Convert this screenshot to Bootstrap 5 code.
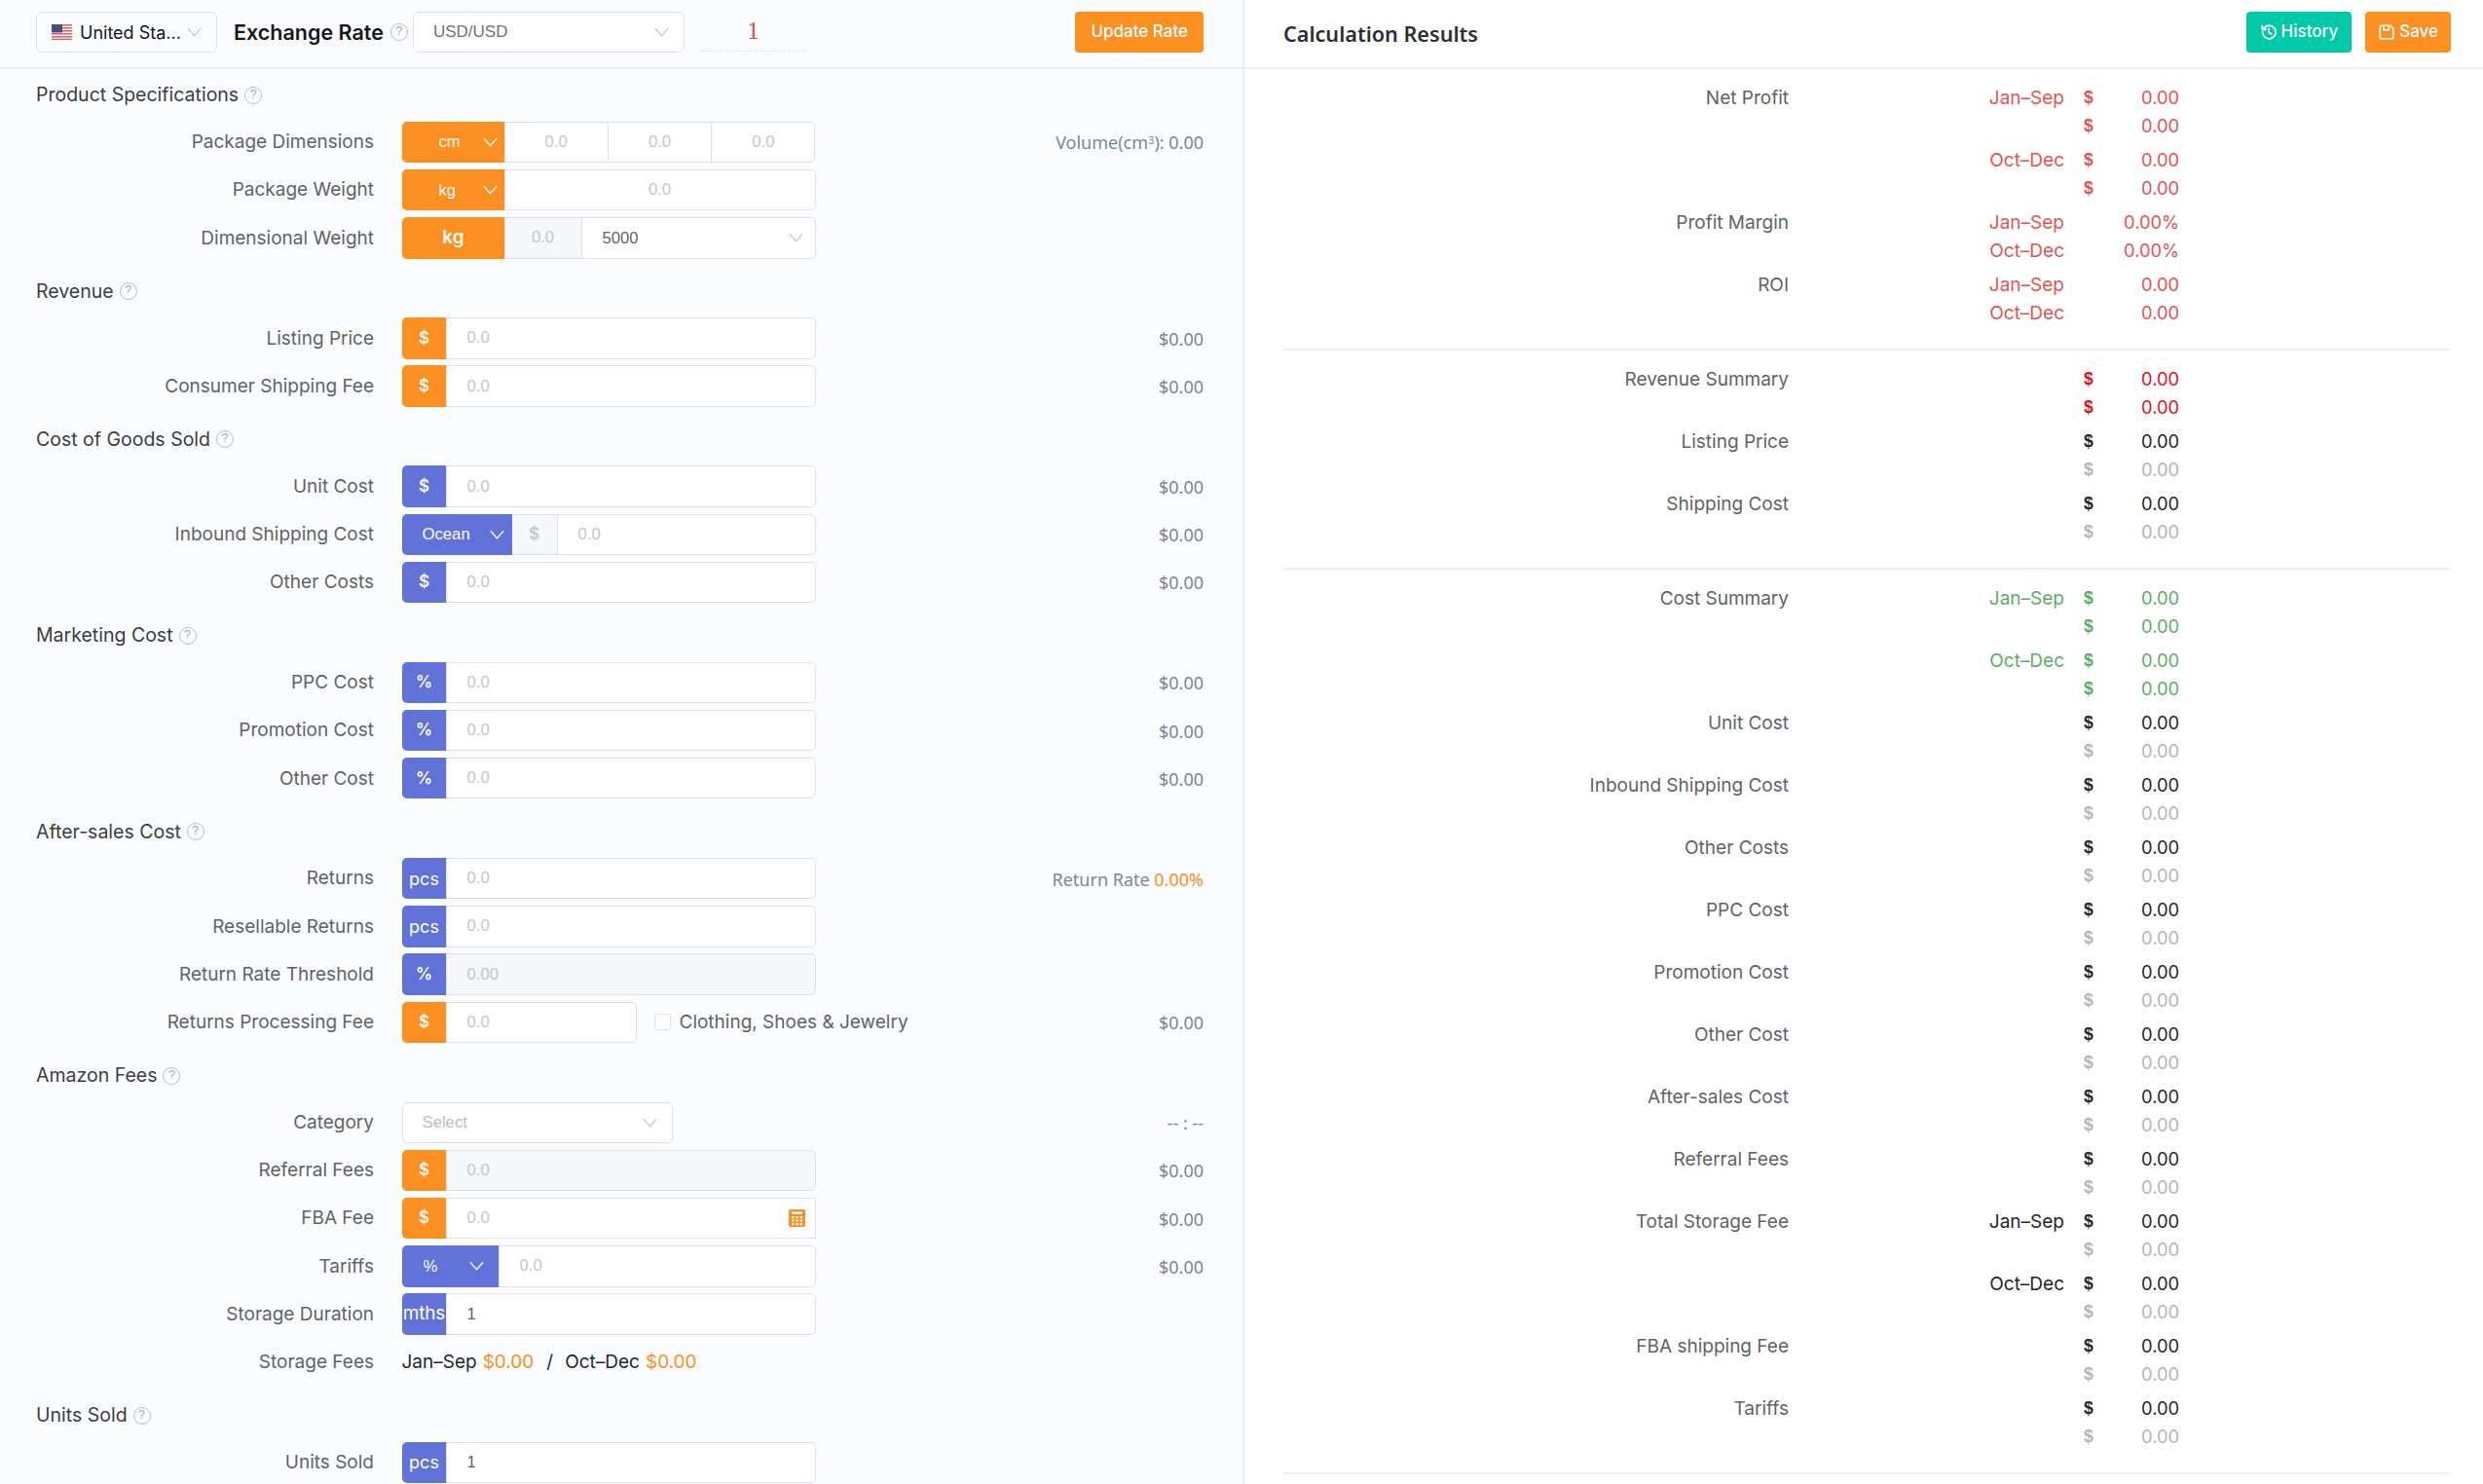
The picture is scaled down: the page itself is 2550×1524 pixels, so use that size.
<!DOCTYPE html>
<html lang="en">
<head>
<meta charset="utf-8">
<title>Calculator</title>
<link rel="stylesheet" href="https://cdn.jsdelivr.net/npm/bootstrap@5.3.0/dist/css/bootstrap.min.css">
<style>
:root{--og:#fb8f22;--bl:#6172d9;--bd:#dfe2ea;}
html,body{height:1524px;overflow:hidden;margin:0;}
body{font-family:Inter,"Noto Sans",sans-serif;font-size:19px;background:#fff;color:#5f6368;}
.pane-l{width:1278px;flex:none;background:#fbfcfe;border-right:2px solid #eceef2;}
.pane-r{flex:1;min-width:0;background:#fff;}
.top-l,.top-r{height:71px;border-bottom:2px solid #eceef2;}
.top-l{padding:0 40px 3px 37px;}
.top-r{padding:0 33px 3px 40px;}
.ctry{width:186px;height:42px;padding:0 0 0 15px;font-size:18px;color:#14161c;background-color:transparent;border-color:var(--bd);display:flex;align-items:center;gap:8px;white-space:nowrap;background-position:right 15px center;}
.form-select{background-image:url("data:image/svg+xml,%3Csvg xmlns='http://www.w3.org/2000/svg' viewBox='0 0 16 10'%3E%3Cpath d='M1 1l7 8 7-8' fill='none' stroke='%23b4b9c3' stroke-width='1.2'/%3E%3C/svg%3E");background-size:15px 10px;}
.ex-ttl{font-size:21.500px;font-weight:600;color:#16181d;margin-left:17px;white-space:nowrap;}
.hq{width:18px;height:18px;border:1.5px solid #b8bec9;border-radius:50%;color:#a2a9b7;font-size:12.500px;line-height:15px;text-align:center;display:inline-block;flex:none;font-family:"Liberation Sans",sans-serif;}
.ex-hq{margin-left:7px;}
.sel-usd{width:279px;height:42px;margin-left:5px;font-family:"Liberation Sans",sans-serif;font-size:17px;color:#6b7280;padding-left:20px;border-color:var(--bd);background-color:#fff;background-position:right 15px center;}
.rate-in{width:107px;height:40px;margin:0 0 0 17px;border:0;border-bottom:1.5px dashed #dcdfe6;background:transparent;color:#e24b4b;font-family:"Liberation Serif",serif;font-size:25px;text-align:center;outline:0;border-radius:0;padding:0 0 2px;}
.btn-og,.btn-tl{height:42px;border:0;border-radius:4px;color:#fff;font-size:17px;font-weight:500;padding:0 14px;display:inline-flex;align-items:center;gap:4px;white-space:nowrap;}
.btn-og{background:var(--og);}
.btn-og:hover{background:var(--og);color:#fff;}
.btn-tl{background:#00c9a7;}
.btn-tl:hover{background:#00c9a7;color:#fff;}
.btn-ur{padding:0 16px;}
.btn-sv{margin-left:14px;padding:0 13px;}
.res-ttl{font-family:"Noto Sans",sans-serif;font-size:21.600px;font-weight:600;color:#2b2f36;margin:3px 0 0;}
.sec-ttl{height:53.8px;display:flex;align-items:center;gap:6px;padding-left:37px;color:#3a3d44;font-size:19.500px;}
.frow{height:42.4px;margin-bottom:6.8px;display:flex;align-items:center;padding:0 40px 0 0;}
.flab{width:384px;flex:none;text-align:right;white-space:nowrap;color:#5f6368;padding-top:1px;}
.fctl{width:425px;margin-left:28.5px;flex:none;height:100%;}
.fctl.shortc{width:241px;}
.fctl.catc{width:278px;}
.fctl .form-control,.fctl .form-select{height:100%;border-color:var(--bd);font-family:"Liberation Sans",sans-serif;font-size:16.7px;color:#5f6368;border-radius:5px;padding:0 0 0 21px;background-color:#fff;min-height:0;box-shadow:none;}
.fctl .form-control::placeholder{color:#c2c6cf;}
.fctl .form-control:disabled{background:#f5f7fa;}
.fctl .ctr{text-align:center;padding:0;}
.fctl .input-group-text{width:46px;padding:0;justify-content:center;border:0;border-radius:5px 0 0 5px;color:#fff;font-size:17px;font-weight:600;height:100%;}
.input-group-text.fo{background:var(--og);}
.input-group-text.fb{background:var(--bl);}
.fctl .input-group-text.un{font-weight:400;font-size:18px;}
.fctl .input-group-text.mt{font-size:19px;letter-spacing:-.2px;}
.fctl .wide{width:106px;}
.fctl .fw-k{font-size:19px;}
.fctl .form-select.so,.fctl .form-select.sb{flex:none;border:0;color:#fff;font-family:"Liberation Sans",sans-serif;border-radius:5px 0 0 5px;background-image:url("data:image/svg+xml,%3Csvg xmlns='http://www.w3.org/2000/svg' viewBox='0 0 16 10'%3E%3Cpath d='M1 1l7 8 7-8' fill='none' stroke='%23fff' stroke-width='1.4'/%3E%3C/svg%3E");background-position:right 8px center;}
.fctl .form-select.so{width:106px;background-color:var(--og);padding-left:38px;}
.fctl .form-select.sb{width:113px;background-color:var(--bl);padding-left:21px;}
.fctl .form-select.sp{width:100px;padding-left:22px;background-position:right 16px center;}
.fctl .addg{width:48px;padding:0;justify-content:center;background:#f5f7fa;border:1px solid var(--bd);color:#c2c6cf;font-weight:600;border-radius:0;}
.fctl .w80{flex:none;width:80px;}
.fctl .sel-w{background-position:right 12px center;padding-left:21px;}
.fctl .sel-ph{color:#b9bdc6;padding-left:20px;background-position:right 15px center;}
.fval{margin-left:auto;color:#7d8694;white-space:nowrap;padding-top:2px;font-family:"Noto Sans",sans-serif;font-size:18px;}
.fval b{font-weight:400;color:var(--og);}
.fval sup{font-size:11px;}
.calc{position:absolute;right:11px;top:50%;transform:translateY(-50%);z-index:6;}
.chk{width:17px;height:17px;border:1.5px solid var(--bd);border-radius:3px;background:#fff;margin:0 9px 0 18px;flex:none;}
.chk-l{white-space:nowrap;color:#5f6368;}
.stor{margin-left:28.5px;color:#23262c;white-space:nowrap;display:flex;gap:6px;padding-top:1px;}
.stor b{font-weight:400;color:var(--og);}
.stor i{font-style:normal;margin:0 6px 0 7px;}
.rbody{padding:15px 33px 0 40px;}
.rgrp{display:flex;margin-bottom:6.4px;line-height:28.8px;}
.rlab{width:519px;flex:none;text-align:right;color:#5f6368;white-space:nowrap;padding-top:1px;}
.rline{display:flex;height:28.8px;}
.rper{width:283px;flex:none;text-align:right;white-space:nowrap;padding-top:1px;}
.rsym{width:12px;margin-left:20px;font-weight:700;flex:none;font-size:17.5px;font-family:"Liberation Sans",sans-serif;}
.rval{width:86px;text-align:right;flex:none;white-space:nowrap;font-size:18.3px;}
.c-r{color:#e25454;}
.c-rr{color:#e01218;}
.c-g{color:#5dad66;}
.c-k{color:#23262c;}
.c-m{color:#b3b5b9;}
.rsep{border:0;border-top:2px solid #eceef2;opacity:1;margin:22.5px 0 15px;margin-right:1px;}
</style>
</head>
<body>
<div class="d-flex">
<section class="pane-l">
  <div class="top-l d-flex align-items-center">
    <div class="form-select ctry"><svg width="21" height="16" viewBox="0 0 21 16"><rect width="21" height="16" fill="#fff"/><g fill="#d9646b"><rect width="21" height="1.6"/><rect y="3" width="21" height="1.6"/><rect y="6" width="21" height="1.6"/><rect y="9" width="21" height="1.6"/><rect y="12" width="21" height="1.6"/><rect y="14.6" width="21" height="1.4"/></g><rect width="11" height="8.5" fill="#46507f"/></svg><span>United Sta...</span></div>
    <span class="ex-ttl">Exchange Rate</span><span class="hq ex-hq">?</span>
    <select class="form-select sel-usd"><option>USD/USD</option></select>
    <input class="rate-in" value="1" aria-label="rate">
    <button class="btn btn-og btn-ur ms-auto">Update Rate</button>
  </div>

  <div class="sec-ttl">Product Specifications <span class="hq">?</span></div>
  <div class="frow"><div class="flab">Package Dimensions</div><div class="fctl input-group"><select class="form-select so"><option>cm</option></select><input class="form-control ctr" placeholder="0.0"><input class="form-control ctr" placeholder="0.0"><input class="form-control ctr" placeholder="0.0"></div><div class="fval">Volume(cm<sup>3</sup>): 0.00</div></div>
  <div class="frow"><div class="flab">Package Weight</div><div class="fctl input-group"><select class="form-select so"><option>kg</option></select><input class="form-control ctr" placeholder="0.0"></div></div>
  <div class="frow"><div class="flab">Dimensional Weight</div><div class="fctl input-group"><span class="input-group-text fo wide fw-k">kg</span><input class="form-control ctr w80" placeholder="0.0" disabled><select class="form-select sel-w"><option>5000</option></select></div></div>

  <div class="sec-ttl">Revenue <span class="hq">?</span></div>
  <div class="frow"><div class="flab">Listing Price</div><div class="fctl input-group"><span class="input-group-text fo">$</span><input class="form-control" placeholder="0.0"></div><div class="fval">$0.00</div></div>
  <div class="frow"><div class="flab">Consumer Shipping Fee</div><div class="fctl input-group"><span class="input-group-text fo">$</span><input class="form-control" placeholder="0.0"></div><div class="fval">$0.00</div></div>

  <div class="sec-ttl">Cost of Goods Sold <span class="hq">?</span></div>
  <div class="frow"><div class="flab">Unit Cost</div><div class="fctl input-group"><span class="input-group-text fb">$</span><input class="form-control" placeholder="0.0"></div><div class="fval">$0.00</div></div>
  <div class="frow"><div class="flab">Inbound Shipping Cost</div><div class="fctl input-group"><select class="form-select sb"><option>Ocean</option></select><span class="input-group-text addg">$</span><input class="form-control" placeholder="0.0"></div><div class="fval">$0.00</div></div>
  <div class="frow"><div class="flab">Other Costs</div><div class="fctl input-group"><span class="input-group-text fb">$</span><input class="form-control" placeholder="0.0"></div><div class="fval">$0.00</div></div>

  <div class="sec-ttl">Marketing Cost <span class="hq">?</span></div>
  <div class="frow"><div class="flab">PPC Cost</div><div class="fctl input-group"><span class="input-group-text fb">%</span><input class="form-control" placeholder="0.0"></div><div class="fval">$0.00</div></div>
  <div class="frow"><div class="flab">Promotion Cost</div><div class="fctl input-group"><span class="input-group-text fb">%</span><input class="form-control" placeholder="0.0"></div><div class="fval">$0.00</div></div>
  <div class="frow"><div class="flab">Other Cost</div><div class="fctl input-group"><span class="input-group-text fb">%</span><input class="form-control" placeholder="0.0"></div><div class="fval">$0.00</div></div>

  <div class="sec-ttl">After-sales Cost <span class="hq">?</span></div>
  <div class="frow"><div class="flab">Returns</div><div class="fctl input-group"><span class="input-group-text fb un">pcs</span><input class="form-control" placeholder="0.0"></div><div class="fval">Return Rate <b>0.00%</b></div></div>
  <div class="frow"><div class="flab">Resellable Returns</div><div class="fctl input-group"><span class="input-group-text fb un">pcs</span><input class="form-control" placeholder="0.0"></div></div>
  <div class="frow"><div class="flab">Return Rate Threshold</div><div class="fctl input-group"><span class="input-group-text fb">%</span><input class="form-control" placeholder="0.00" disabled></div></div>
  <div class="frow"><div class="flab">Returns Processing Fee</div><div class="fctl shortc input-group"><span class="input-group-text fo">$</span><input class="form-control" placeholder="0.0"></div><span class="chk"></span><span class="chk-l">Clothing, Shoes &amp; Jewelry</span><div class="fval">$0.00</div></div>

  <div class="sec-ttl">Amazon Fees <span class="hq">?</span></div>
  <div class="frow"><div class="flab">Category</div><div class="fctl catc"><select class="form-select sel-ph"><option>Select</option></select></div><div class="fval">-- : --</div></div>
  <div class="frow"><div class="flab">Referral Fees</div><div class="fctl input-group"><span class="input-group-text fo">$</span><input class="form-control" placeholder="0.0" disabled></div><div class="fval">$0.00</div></div>
  <div class="frow"><div class="flab">FBA Fee</div><div class="fctl input-group position-relative"><span class="input-group-text fo">$</span><input class="form-control" placeholder="0.0"><svg class="calc" width="17" height="18" viewBox="0 0 17 18"><rect width="17" height="18" rx="2" fill="#fb8f22"/><rect x="3" y="2.5" width="11" height="2.4" fill="#fff"/><g fill="#fff"><rect x="3" y="7" width="2.4" height="2.2"/><rect x="7.3" y="7" width="2.4" height="2.2"/><rect x="11.6" y="7" width="2.4" height="2.2"/><rect x="3" y="10.5" width="2.4" height="2.2"/><rect x="7.3" y="10.5" width="2.4" height="2.2"/><rect x="11.6" y="10.5" width="2.4" height="2.2"/><rect x="3" y="14" width="2.4" height="2.2"/><rect x="7.3" y="14" width="2.4" height="2.2"/><rect x="11.6" y="14" width="2.4" height="2.2"/></g></svg></div><div class="fval">$0.00</div></div>
  <div class="frow"><div class="flab">Tariffs</div><div class="fctl input-group"><select class="form-select sb sp"><option>%</option></select><input class="form-control" placeholder="0.0"></div><div class="fval">$0.00</div></div>
  <div class="frow"><div class="flab">Storage Duration</div><div class="fctl input-group"><span class="input-group-text fb un mt">mths</span><input class="form-control" value="1"></div></div>
  <div class="frow"><div class="flab">Storage Fees</div><div class="stor"><span>Jan–Sep</span><b>$0.00</b><i>/</i><span>Oct–Dec</span><b>$0.00</b></div></div>

  <div class="sec-ttl">Units Sold <span class="hq">?</span></div>
  <div class="frow"><div class="flab">Units Sold</div><div class="fctl input-group"><span class="input-group-text fb un">pcs</span><input class="form-control" value="1"></div></div>
</section>

<section class="pane-r">
  <div class="top-r d-flex align-items-center">
    <h2 class="res-ttl">Calculation Results</h2>
    <button class="btn btn-tl ms-auto"><svg width="18" height="18" viewBox="0 0 24 24" fill="none" stroke="#fff" stroke-width="2.4" stroke-linecap="round" stroke-linejoin="round"><path d="M3.5 12a9 9 0 1 0 2.8-6.5L3.5 8.5"/><path d="M3 3.5v5h5"/><path d="M12 7.5V12.500l3.500 2"/></svg>History</button>
    <button class="btn btn-og btn-sv"><svg width="18" height="18" viewBox="0 0 24 24" fill="none" stroke="#fff" stroke-width="2.300" stroke-linejoin="round"><path d="M5 3h12l4 4v12a2 2 0 0 1-2 2H5a2 2 0 0 1-2-2V5a2 2 0 0 1 2-2z"/><path d="M8 3v6h7V3"/></svg>Save</button>
  </div>
  <div class="rbody">
    <div class="rgrp"><div class="rlab">Net Profit</div><div class="c-r"><div class="rline"><span class="rper">Jan–Sep</span><span class="rsym">$</span><span class="rval">0.00</span></div><div class="rline"><span class="rper"></span><span class="rsym">$</span><span class="rval">0.00</span></div></div></div>
    <div class="rgrp"><div class="rlab"></div><div class="c-r"><div class="rline"><span class="rper">Oct–Dec</span><span class="rsym">$</span><span class="rval">0.00</span></div><div class="rline"><span class="rper"></span><span class="rsym">$</span><span class="rval">0.00</span></div></div></div>
    <div class="rgrp"><div class="rlab">Profit Margin</div><div class="c-r"><div class="rline"><span class="rper">Jan–Sep</span><span class="rsym"></span><span class="rval">0.00%</span></div><div class="rline"><span class="rper">Oct–Dec</span><span class="rsym"></span><span class="rval">0.00%</span></div></div></div>
    <div class="rgrp"><div class="rlab">ROI</div><div class="c-r"><div class="rline"><span class="rper">Jan–Sep</span><span class="rsym"></span><span class="rval">0.00</span></div><div class="rline"><span class="rper">Oct–Dec</span><span class="rsym"></span><span class="rval">0.00</span></div></div></div>
    <hr class="rsep">
    <div class="rgrp"><div class="rlab">Revenue Summary</div><div class="c-rr"><div class="rline"><span class="rper"></span><span class="rsym">$</span><span class="rval">0.00</span></div><div class="rline"><span class="rper"></span><span class="rsym">$</span><span class="rval">0.00</span></div></div></div>
    <div class="rgrp"><div class="rlab">Listing Price</div><div><div class="rline c-k"><span class="rper"></span><span class="rsym">$</span><span class="rval">0.00</span></div><div class="rline c-m"><span class="rper"></span><span class="rsym">$</span><span class="rval">0.00</span></div></div></div>
    <div class="rgrp"><div class="rlab">Shipping Cost</div><div><div class="rline c-k"><span class="rper"></span><span class="rsym">$</span><span class="rval">0.00</span></div><div class="rline c-m"><span class="rper"></span><span class="rsym">$</span><span class="rval">0.00</span></div></div></div>
    <hr class="rsep">
    <div class="rgrp"><div class="rlab">Cost Summary</div><div class="c-g"><div class="rline"><span class="rper">Jan–Sep</span><span class="rsym">$</span><span class="rval">0.00</span></div><div class="rline"><span class="rper"></span><span class="rsym">$</span><span class="rval">0.00</span></div></div></div>
    <div class="rgrp"><div class="rlab"></div><div class="c-g"><div class="rline"><span class="rper">Oct–Dec</span><span class="rsym">$</span><span class="rval">0.00</span></div><div class="rline"><span class="rper"></span><span class="rsym">$</span><span class="rval">0.00</span></div></div></div>
    <div class="rgrp"><div class="rlab">Unit Cost</div><div><div class="rline c-k"><span class="rper"></span><span class="rsym">$</span><span class="rval">0.00</span></div><div class="rline c-m"><span class="rper"></span><span class="rsym">$</span><span class="rval">0.00</span></div></div></div>
    <div class="rgrp"><div class="rlab">Inbound Shipping Cost</div><div><div class="rline c-k"><span class="rper"></span><span class="rsym">$</span><span class="rval">0.00</span></div><div class="rline c-m"><span class="rper"></span><span class="rsym">$</span><span class="rval">0.00</span></div></div></div>
    <div class="rgrp"><div class="rlab">Other Costs</div><div><div class="rline c-k"><span class="rper"></span><span class="rsym">$</span><span class="rval">0.00</span></div><div class="rline c-m"><span class="rper"></span><span class="rsym">$</span><span class="rval">0.00</span></div></div></div>
    <div class="rgrp"><div class="rlab">PPC Cost</div><div><div class="rline c-k"><span class="rper"></span><span class="rsym">$</span><span class="rval">0.00</span></div><div class="rline c-m"><span class="rper"></span><span class="rsym">$</span><span class="rval">0.00</span></div></div></div>
    <div class="rgrp"><div class="rlab">Promotion Cost</div><div><div class="rline c-k"><span class="rper"></span><span class="rsym">$</span><span class="rval">0.00</span></div><div class="rline c-m"><span class="rper"></span><span class="rsym">$</span><span class="rval">0.00</span></div></div></div>
    <div class="rgrp"><div class="rlab">Other Cost</div><div><div class="rline c-k"><span class="rper"></span><span class="rsym">$</span><span class="rval">0.00</span></div><div class="rline c-m"><span class="rper"></span><span class="rsym">$</span><span class="rval">0.00</span></div></div></div>
    <div class="rgrp"><div class="rlab">After-sales Cost</div><div><div class="rline c-k"><span class="rper"></span><span class="rsym">$</span><span class="rval">0.00</span></div><div class="rline c-m"><span class="rper"></span><span class="rsym">$</span><span class="rval">0.00</span></div></div></div>
    <div class="rgrp"><div class="rlab">Referral Fees</div><div><div class="rline c-k"><span class="rper"></span><span class="rsym">$</span><span class="rval">0.00</span></div><div class="rline c-m"><span class="rper"></span><span class="rsym">$</span><span class="rval">0.00</span></div></div></div>
    <div class="rgrp"><div class="rlab">Total Storage Fee</div><div><div class="rline c-k"><span class="rper">Jan–Sep</span><span class="rsym">$</span><span class="rval">0.00</span></div><div class="rline c-m"><span class="rper"></span><span class="rsym">$</span><span class="rval">0.00</span></div></div></div>
    <div class="rgrp"><div class="rlab"></div><div><div class="rline c-k"><span class="rper">Oct–Dec</span><span class="rsym">$</span><span class="rval">0.00</span></div><div class="rline c-m"><span class="rper"></span><span class="rsym">$</span><span class="rval">0.00</span></div></div></div>
    <div class="rgrp"><div class="rlab">FBA shipping Fee</div><div><div class="rline c-k"><span class="rper"></span><span class="rsym">$</span><span class="rval">0.00</span></div><div class="rline c-m"><span class="rper"></span><span class="rsym">$</span><span class="rval">0.00</span></div></div></div>
    <div class="rgrp"><div class="rlab">Tariffs</div><div><div class="rline c-k"><span class="rper"></span><span class="rsym">$</span><span class="rval">0.00</span></div><div class="rline c-m"><span class="rper"></span><span class="rsym">$</span><span class="rval">0.00</span></div></div></div>
    <hr class="rsep">
  </div>
</section>
</div>
<script src="https://cdn.jsdelivr.net/npm/bootstrap@5.3.0/dist/js/bootstrap.bundle.min.js"></script>
</body>
</html>
